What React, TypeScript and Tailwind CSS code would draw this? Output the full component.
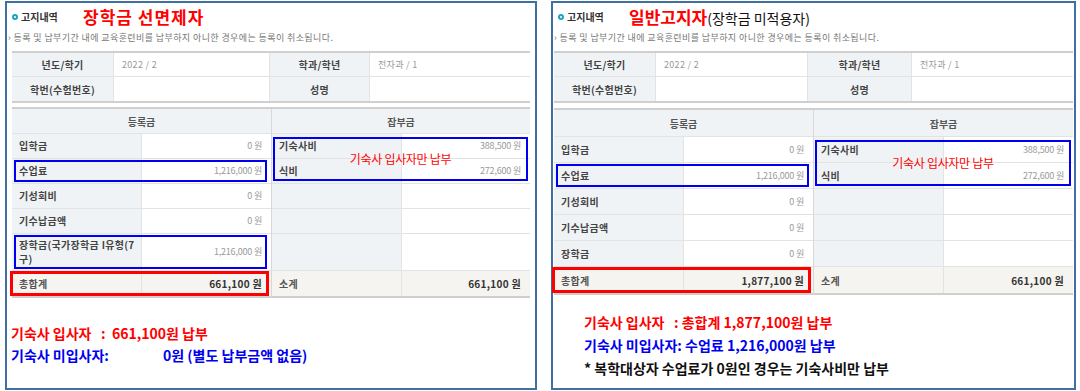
import type { ReactNode } from 'react';

const KR = { fontFamily: '"Noto Sans CJK KR", "Noto Sans", sans-serif' };

type FeeItem = { label: ReactNode; value?: string; h: string; box?: 'blue' };

function Cell({ children, className }: { children?: ReactNode; className?: string }) {
  return <div className={`flex items-center ${className ?? ''}`}>{children}</div>;
}

function FeeRow({ item, rowH }: { item: FeeItem; rowH: string }) {
  return (
    <div className={`relative flex border-b border-[#e3e3e3] ${item.h || rowH}`}>
      <Cell className="w-[130px] shrink-0 bg-[#f0f3f5] border-r border-[#e3e3e3] pl-[7px] text-[10px] font-bold leading-[14px] tracking-[0.3px] text-[#444]">
        {item.label}
      </Cell>
      <Cell className="flex-1 justify-end bg-white pr-[9px] text-[9px] tracking-[-0.2px] text-[#9a9a9a]">
        {item.value}
      </Cell>
      {item.box === 'blue' && (
        <div className="absolute left-[2px] right-[4px] top-[1px] bottom-[1px] border-2 border-[#0000ee]" />
      )}
    </div>
  );
}

function TotalRow({ label, value, boxed, h }: { label: string; value: string; boxed?: boolean; h: string }) {
  return (
    <div className={`relative flex bg-[#f5f4f0] border-b-2 border-[#cfcfcf] ${h}`}>
      <Cell className="w-[130px] shrink-0 border-r border-[#e3e3e3] pl-[7px] text-[10px] font-bold tracking-[0.3px] text-[#555]">
        {label}
      </Cell>
      <Cell className="flex-1 justify-end pr-[9px] text-[10px] font-bold tracking-[0.3px] text-[#333]">{value}</Cell>
      {boxed && <div className="absolute -left-[2px] right-[2px] top-0 bottom-0 border-[3px] border-[#ff0000]" />}
    </div>
  );
}

interface PanelProps {
  width: string;
  pad: string;
  title: ReactNode;
  infoCols: string;
  rowH: string;
  headH: string;
  totalH: string;
  feeTop: string;
  left: FeeItem[];
  total: string;
  emptyRows: string[];
  notes: ReactNode;
}

function Panel({ width, pad, title, infoCols, rowH, headH, totalH, feeTop, left, total, emptyRows, notes }: PanelProps) {
  return (
    <div className={`${width} h-[389px] border-2 border-[#4070a0] flex flex-col`} style={KR}>
      <div className="h-[27px] flex items-center pl-[5px]">
        <span className="w-[6px] h-[6px] rounded-full border-[2px] border-[#1ba3c6] mr-[3px]" />
        <span className="text-[10px] font-bold text-[#333] w-[62px]">고지내역</span>
        {title}
      </div>
      <div className="h-[16px] flex items-center pl-[1px] text-[9px] tracking-[0.4px] text-[#777] whitespace-nowrap">
        › 등록 및 납부기간 내에 교육훈련비를 납부하지 아니한 경우에는 등록이 취소됩니다.
      </div>
      <div className={`${pad} mt-[5px]`}>
        <div className={`grid ${infoCols} border-t-2 border-b-2 border-[#cfcfcf] text-[10px] tracking-[0.3px]`}>
          <Cell className="h-[24px] justify-center bg-[#f0f3f5] border-b border-r border-[#e3e3e3] font-bold text-[#444]">년도/학기</Cell>
          <Cell className="h-[24px] pl-[8px] border-b border-r border-[#e3e3e3] text-[9px] text-[#999]">2022 / 2</Cell>
          <Cell className="h-[24px] justify-center bg-[#f0f3f5] border-b border-r border-[#e3e3e3] font-bold text-[#444]">학과/학년</Cell>
          <Cell className="h-[24px] pl-[8px] border-b border-[#e3e3e3] text-[9px] text-[#999]">전자과 / 1</Cell>
          <Cell className="h-[24px] justify-center bg-[#f0f3f5] border-r border-[#e3e3e3] font-bold text-[#444]">학번(수험번호)</Cell>
          <Cell className="h-[24px] border-r border-[#e3e3e3]" />
          <Cell className="h-[24px] justify-center bg-[#f0f3f5] border-r border-[#e3e3e3] font-bold text-[#444]">성명</Cell>
          <Cell className="h-[24px]" />
        </div>

        <div className={`${feeTop} flex border-t-2 border-[#cfcfcf]`}>
          <div className="w-[260px] shrink-0 flex flex-col border-r border-[#d8d8d8]">
            <Cell className={`${headH} justify-center bg-[#f0f3f5] border-b border-[#e3e3e3] text-[10px] font-bold text-[#555]`}>등록금</Cell>
            {left.map((item, i) => (
              <FeeRow key={i} item={item} rowH={rowH} />
            ))}
            <TotalRow label="총합계" value={total} boxed h={totalH} />
          </div>
          <div className="flex-1 flex flex-col">
            <Cell className={`${headH} justify-center bg-[#f0f3f5] border-b border-[#e3e3e3] text-[10px] font-bold text-[#555]`}>잡부금</Cell>
            <div className="relative">
              <FeeRow item={{ label: '기숙사비', value: '388,500 원', h: '' }} rowH={rowH} />
              <FeeRow item={{ label: '식비', value: '272,600 원', h: '' }} rowH={rowH} />
              <div className="absolute left-[1px] right-[2px] top-[3px] bottom-[3px] border-2 border-[#0000ee] flex items-center justify-center">
                <span className="text-[12px] text-[#ff0000] tracking-[-0.3px]">기숙사 입사자만 납부</span>
              </div>
            </div>
            {emptyRows.map((h, i) => (
              <FeeRow key={i} item={{ label: '', h }} rowH={rowH} />
            ))}
            <TotalRow label="소계" value="661,100 원" h={totalH} />
          </div>
        </div>
      </div>
      {notes}
    </div>
  );
}

export default function App() {
  return (
    <div className="w-[1080px] h-[391px] bg-white flex gap-[14px] pl-[5px] pt-[1px] overflow-hidden">
      <Panel
        width="w-[532px]"
        pad="pl-[5px] pr-[5px]"
        infoCols="grid-cols-[102px_156px_100px_1fr]"
        rowH="h-[25px]"
        headH="h-[25px]"
        totalH="h-[27px]"
        feeTop="mt-[4px]"
        title={<span className="text-[17px] font-bold text-[#ff0000] tracking-[1px]">장학금 선면제자</span>}
        left={[
          { label: '입학금', value: '0 원', h: '' },
          { label: '수업료', value: '1,216,000 원', h: '', box: 'blue' },
          { label: '기성회비', value: '0 원', h: '' },
          { label: '기수납금액', value: '0 원', h: '' },
          {
            label: (
              <span>
                장학금(국가장학금 I유형(7
                <br />구)
              </span>
            ),
            value: '1,216,000 원',
            h: 'h-[37px]',
            box: 'blue',
          },
        ]}
        total="661,100 원"
        emptyRows={['h-[25px]', 'h-[25px]', 'h-[37px]']}
        notes={
          <div className="mt-[24px] pl-[4px] text-[14px] font-bold leading-[22px] whitespace-pre">
            <div className="text-[#ff0000]">기숙사 입사자   :  661,100원 납부</div>
            <div className="text-[#0000ee] flex">
              <span className="w-[152px]">기숙사 미입사자:</span>
              <span>0원 (별도 납부금액 없음)</span>
            </div>
          </div>
        }
      />
      <Panel
        width="w-[525px]"
        pad="pl-[1px] pr-[1px]"
        infoCols="grid-cols-[102px_152px_104px_1fr]"
        rowH="h-[26px]"
        headH="h-[27px]"
        totalH="h-[28px]"
        feeTop="mt-[5px]"
        title={
          <span className="flex items-baseline">
            <span className="text-[17px] font-bold text-[#ff0000]">일반고지자</span>
            <span className="text-[14px] text-[#111]">(장학금 미적용자)</span>
          </span>
        }
        left={[
          { label: '입학금', value: '0 원', h: '' },
          { label: '수업료', value: '1,216,000 원', h: '', box: 'blue' },
          { label: '기성회비', value: '0 원', h: '' },
          { label: '기수납금액', value: '0 원', h: '' },
          { label: '장학금', value: '0 원', h: '' },
        ]}
        total="1,877,100 원"
        emptyRows={['h-[26px]', 'h-[26px]', 'h-[26px]']}
        notes={
          <div className="mt-[16px] pl-[31px] text-[14px] font-bold leading-[23px] whitespace-pre">
            <div className="text-[#ff0000]">기숙사 입사자   : 총합계 1,877,100원 납부</div>
            <div className="text-[#0000ee]">기숙사 미입사자: 수업료 1,216,000원 납부</div>
            <div className="text-[#111]">* 복학대상자 수업료가 0원인 경우는 기숙사비만 납부</div>
          </div>
        }
      />
    </div>
  );
}
